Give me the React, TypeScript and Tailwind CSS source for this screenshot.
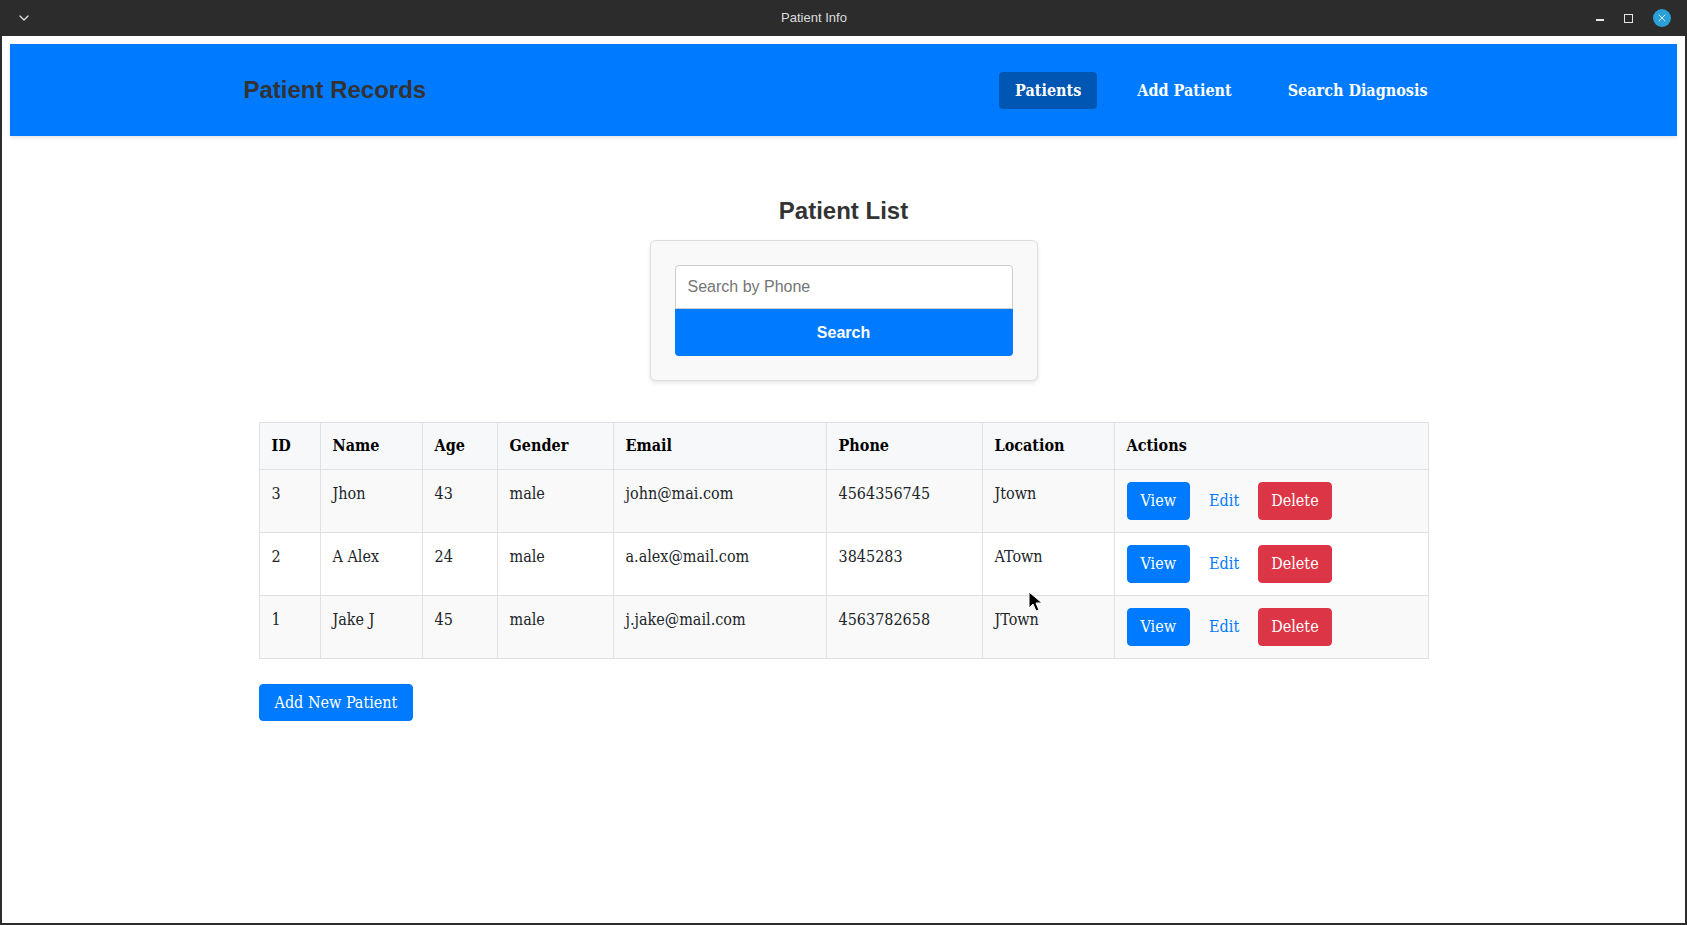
import { ChevronDown, X } from 'lucide-react'

const serif = 'font-["DejaVu_Serif",serif] [font-stretch:condensed]'
const sans = 'font-["Liberation_Sans",Arial,sans-serif]'

const patients = [
  { id: 3, name: 'Jhon', age: 43, gender: 'male', email: 'john@mai.com', phone: '4564356745', location: 'Jtown' },
  { id: 2, name: 'A Alex', age: 24, gender: 'male', email: 'a.alex@mail.com', phone: '3845283', location: 'ATown' },
  { id: 1, name: 'Jake J', age: 45, gender: 'male', email: 'j.jake@mail.com', phone: '4563782658', location: 'JTown' },
]

const columns = [
  { label: 'ID', w: 'w-[61px]' },
  { label: 'Name', w: 'w-[102px]' },
  { label: 'Age', w: 'w-[75px]' },
  { label: 'Gender', w: 'w-[116px]' },
  { label: 'Email', w: 'w-[213px]' },
  { label: 'Phone', w: 'w-[156px]' },
  { label: 'Location', w: 'w-[132px]' },
  { label: 'Actions', w: 'w-[314px]' },
]

function TitleBar() {
  return (
    <div className="relative flex h-9 shrink-0 items-center bg-[#2c2c2c] px-4">
      <ChevronDown className="h-4 w-4 text-[#e0e0e0]" strokeWidth={2} />
      <div className={`flex-1 text-center text-[13px] text-[#dcdcdc] ${sans}`}>Patient Info</div>
      <div className="flex items-center gap-5">
        <span className="mt-1 block h-[1.5px] w-[8px] bg-[#e6e6e6]" />
        <span className="block h-[9px] w-[9px] border-[1.5px] border-[#e6e6e6]" />
        <span className="flex h-[18px] w-[18px] items-center justify-center rounded-full bg-[#2a9fd8]">
          <X className="h-3 w-3 text-white" strokeWidth={1.5} />
        </span>
      </div>
    </div>
  )
}

function NavBar() {
  return (
    <nav className="h-[92px] bg-[#007bff] shadow-[0_2px_4px_rgba(0,0,0,0.1)]">
      <div className="mx-auto flex h-full max-w-[1200px] items-center justify-between">
        <h1 className={`text-[24px] font-bold text-[#333] ${sans}`}>Patient Records</h1>
        <ul className={`flex gap-6 text-[16px] font-bold text-white ${serif}`}>
          {['Patients', 'Add Patient', 'Search Diagnosis'].map((item, i) => (
            <li key={item}>
              <a
                href="#"
                className={`block rounded px-4 py-[6px] leading-[25px] ${i === 0 ? 'bg-[#0056b3]' : ''}`}
              >
                {item}
              </a>
            </li>
          ))}
        </ul>
      </div>
    </nav>
  )
}

function SearchCard() {
  return (
    <div className="mx-auto w-[388px] rounded-md border border-[#ddd] bg-[#f9f9f9] p-6 shadow-[0_2px_4px_rgba(0,0,0,0.1)]">
      <input
        type="text"
        placeholder="Search by Phone"
        className={`block h-[44px] w-full rounded-t border border-[#ccc] bg-white px-3 text-[16px] text-[#333] placeholder:text-[#757575] ${sans}`}
      />
      <button
        className={`block h-[47px] w-full rounded-b bg-[#007bff] text-[16px] font-bold text-white ${sans}`}
      >
        Search
      </button>
    </div>
  )
}

function PatientTable() {
  return (
    <table className={`mt-[41px] w-full table-fixed border-collapse text-[16px] text-[#212529] ${serif}`}>
      <thead>
        <tr className="bg-[#f7f8f9]">
          {columns.map((c) => (
            <th
              key={c.label}
              className={`${c.w} border border-[#dee2e6] px-3 py-[11px] text-left font-bold leading-6 text-black`}
            >
              {c.label}
            </th>
          ))}
        </tr>
      </thead>
      <tbody>
        {patients.map((p, i) => (
          <tr key={p.id} className={i % 2 === 0 ? 'bg-[#f9f9f9]' : 'bg-white'}>
            {[p.id, p.name, p.age, p.gender, p.email, p.phone, p.location].map((v, j) => (
              <td key={j} className="border border-[#dee2e6] px-3 py-3 align-top leading-6">
                {v}
              </td>
            ))}
            <td className="border border-[#dee2e6] px-3 py-3 align-top">
              <div className="flex items-center gap-[6px]">
                <button className="rounded border border-[#007bff] bg-[#007bff] px-[13px] py-[6px] leading-[24px] text-white">
                  View
                </button>
                <button className="border border-transparent px-3 py-[6px] leading-[24px] text-[#007bff]">Edit</button>
                <button className="rounded border border-[#dc3545] bg-[#dc3545] px-3 py-[6px] leading-[24px] text-white">
                  Delete
                </button>
              </div>
            </td>
          </tr>
        ))}
      </tbody>
    </table>
  )
}

export default function App() {
  return (
    <div className="flex h-[925px] w-[1687px] flex-col overflow-hidden bg-[#2c2c2c]">
      <TitleBar />
      <div className="relative mx-[2px] mb-[2px] flex-1 bg-white p-2">
        <NavBar />
        <main className="mx-auto max-w-[1170px] pt-[60px]">
          <h2 className={`mb-[15px] text-center text-[24px] font-bold leading-[29px] text-[#333] ${sans}`}>
            Patient List
          </h2>
          <SearchCard />
          <PatientTable />
          <button
            className={`mt-[25px] rounded border border-[#007bff] bg-[#007bff] px-[15px] py-[5px] text-[16px] leading-[25px] text-white ${serif}`}
          >
            Add New Patient
          </button>
        </main>

        {/* mouse pointer */}
        <svg className="absolute left-[1026px] top-[555px]" width="16" height="22" viewBox="0 0 16 22">
          <path d="M1 1 L1 17 L5 13 L8 20 L11 19 L8 12 L14 12 Z" fill="#000" stroke="#fff" strokeWidth="1" />
        </svg>
      </div>
    </div>
  )
}
